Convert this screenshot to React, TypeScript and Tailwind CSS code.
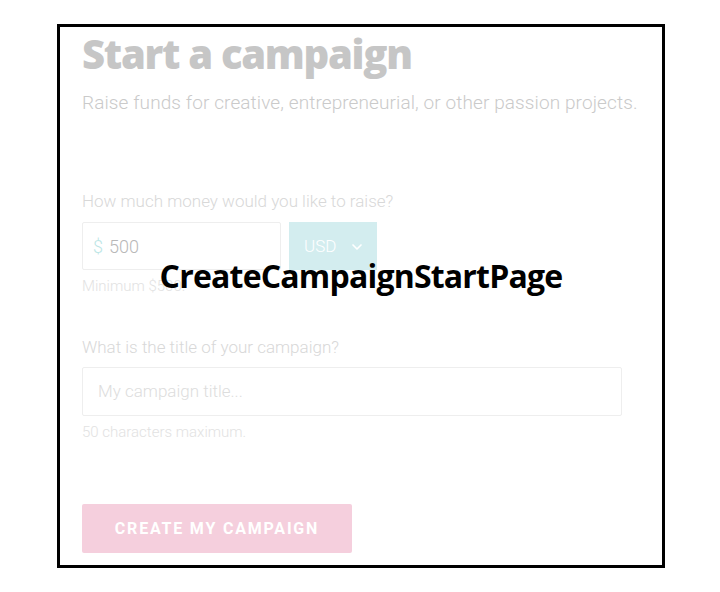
import { ChevronDown } from "lucide-react";

export default function App() {
  return (
    <div className="min-h-[592px] w-[720px] bg-white pl-[57px] pt-[24px]" style={{ fontFamily: "Roboto, 'Liberation Sans', sans-serif" }}>
      <div className="relative h-[544px] w-[608px] border-[3px] border-black">
        <div className="px-[22px] pt-[3px]">
          <h1 className="text-[40px] font-extrabold leading-[48px] tracking-[-1.3px] text-[#c6c6c6]" style={{ fontFamily: "'Open Sans', sans-serif" }}>
            Start a campaign
          </h1>
          <p className="mt-[13px] text-[19px] font-light leading-[24px] tracking-[0.1px] text-[#cacaca]">
            Raise funds for creative, entrepreneurial, or other passion projects.
          </p>

          <label className="mt-[74px] block text-[17px] font-light leading-[24px] text-[#d8d8d8]">
            How much money would you like to raise?
          </label>
          <div className="mt-[9px] flex gap-[8px]">
            <div className="flex h-[48px] w-[199px] items-center gap-[6px] rounded-[2px] border border-[#eeeeee] px-[10px] pt-[1px] text-[18px] font-light">
              <span className="text-[#bde6e6]">$</span>
              <span className="text-[#b8b8b8]">500</span>
            </div>
            <div className="flex h-[48px] w-[88px] items-center justify-between bg-[#d3edef] pl-[15px] pr-[12px] pt-[2px] text-[17px] font-light text-white">
              USD
              <ChevronDown size={16} strokeWidth={2.5} />
            </div>
          </div>
          <p className="mt-[6px] text-[15px] font-light leading-[20px] text-[#e2e2e2]">Minimum $500.</p>

          <label className="mt-[39px] block text-[17px] font-light leading-[24px] text-[#d8d8d8]">
            What is the title of your campaign?
          </label>
          <div className="mt-[8px] flex h-[49px] w-[540px] items-center rounded-[2px] border border-[#eeeeee] px-[15px] text-[17px] font-light text-[#dddddd]">
            My campaign title...
          </div>
          <p className="mt-[6px] text-[15px] font-light leading-[20px] text-[#e2e2e2]">50 characters maximum.</p>

          <button className="mt-[62px] h-[49px] w-[270px] rounded-[2px] bg-[#f5cfdd] text-[16px] font-bold uppercase tracking-[1.8px] text-white">
            Create my campaign
          </button>
        </div>

        <div className="absolute left-0 right-0 top-[227px] text-center text-[32px] font-bold leading-[44px] tracking-[-0.8px] text-black" style={{ fontFamily: "'Open Sans', sans-serif" }}>
          CreateCampaignStartPage
        </div>
      </div>
    </div>
  );
}
